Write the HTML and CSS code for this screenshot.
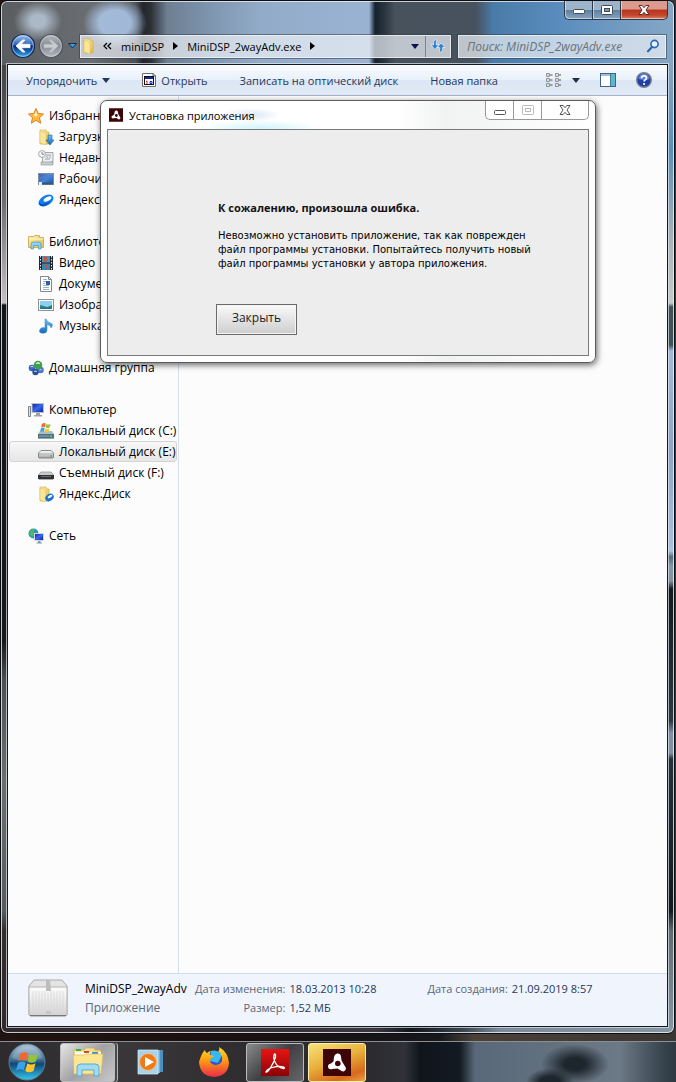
FILE: index.html
```html
<!DOCTYPE html>
<html lang="ru">
<head>
    <meta charset="UTF-8">
    <meta name="viewport" content="width=device-width, initial-scale=1.0">
    <title>MiniDSP_2wayAdv.exe</title>
    <link rel="stylesheet" href="styles.css">
</head>
<body>
    <!-- gradients and symbols shared by the icons -->
    <svg class="defs" width="0" height="0" aria-hidden="true">
        <defs>
            <linearGradient id="gFolder" x1="0" y1="0" x2="1" y2="1">
                <stop offset="0" stop-color="#fff4b4"/><stop offset="1" stop-color="#e2b94c"/>
            </linearGradient>
            <linearGradient id="gBlue" x1="0" y1="0" x2="0" y2="1">
                <stop offset="0" stop-color="#6fc4f4"/><stop offset="1" stop-color="#1566b8"/>
            </linearGradient>
            <linearGradient id="gScreen" x1="0" y1="0" x2="1" y2="1">
                <stop offset="0" stop-color="#0c1fa0"/><stop offset=".5" stop-color="#3b6bea"/><stop offset="1" stop-color="#0a1a94"/>
            </linearGradient>
            <linearGradient id="gDesk" x1="0" y1="0" x2="1" y2="1">
                <stop offset="0" stop-color="#1c3f8c"/><stop offset=".5" stop-color="#4a86d8"/><stop offset="1" stop-color="#1d4a94"/>
            </linearGradient>
            <linearGradient id="gMetal" x1="0" y1="0" x2="0" y2="1">
                <stop offset="0" stop-color="#ffffff"/><stop offset="1" stop-color="#a4a8aa"/>
            </linearGradient>
            <linearGradient id="gBox" x1="0" y1="0" x2="0" y2="1">
                <stop offset="0" stop-color="#fdfdfd"/><stop offset="1" stop-color="#d2d2d2"/>
            </linearGradient>
            <linearGradient id="gNavy" x1="0" y1="0" x2="0" y2="1">
                <stop offset="0" stop-color="#a8c8f0"/><stop offset=".45" stop-color="#2c62b8"/><stop offset=".5" stop-color="#06247e"/><stop offset="1" stop-color="#35b4f6"/>
            </linearGradient>
            <linearGradient id="gGray" x1="0" y1="0" x2="0" y2="1">
                <stop offset="0" stop-color="#b4bac0"/><stop offset=".5" stop-color="#858b92"/><stop offset="1" stop-color="#b6bcc2"/>
            </linearGradient>
            <linearGradient id="gOrb" x1="0" y1="0" x2="0" y2="1">
                <stop offset="0" stop-color="#a9c3d4"/><stop offset=".45" stop-color="#3e6f92"/><stop offset=".55" stop-color="#0f4674"/><stop offset="1" stop-color="#35c8f2"/>
            </linearGradient>
            <linearGradient id="gFox" x1="0" y1="0" x2="0" y2="1">
                <stop offset="0" stop-color="#ffe226"/><stop offset=".45" stop-color="#ff9a12"/><stop offset="1" stop-color="#e92a4a"/>
            </linearGradient>
            <linearGradient id="gRed" x1="0" y1="0" x2="0" y2="1">
                <stop offset="0" stop-color="#e81414"/><stop offset="1" stop-color="#8a0404"/>
            </linearGradient>
        </defs>
        <symbol id="folder" viewBox="0 0 16 16">
            <path d="M2 1h6l1 2h2v12H2z" fill="url(#gFolder)" stroke="#cda748" stroke-width=".6"/>
            <path d="M2 2l6 2v12l-6-2z" fill="#fbe695" stroke="#d8b85c" stroke-width=".5"/>
        </symbol>
        <symbol id="flag" viewBox="0 0 16 16">
            <path d="M2.500 2.500q3-2 5.200-.4L6.500 7q-2.400-1.600-5 .2z" fill="#f0682a"/>
            <path d="M8.500 2.500q2.500 1.600 5.500 0L12.700 7.400q-2.700 1.500-5.300 0z" fill="#93c43c"/>
            <path d="M1.300 8.300q2.600-1.800 5-.2L5 13q-2.500-1.500-5 .2z" fill="#3ea0e4"/>
            <path d="M7.200 8.500q2.500 1.600 5.300 0L11.200 13.400q-2.800 1.600-5.300 0z" fill="#fcc52c"/>
        </symbol>
        <symbol id="air" viewBox="0 0 28 27">
            <path d="M14 4.500q3.500-.5 4 3l.5 4 3 5q2.500 3 .5 5t-5-.5l-2.500-1.500-5 .5q-4 1-4.500-2t3-3.500l2.500-2 .5-4.500q.5-3 3-3.500z" fill="#fff"/>
            <circle cx="14.800" cy="14.500" r="2.800" fill="#3d0505"/>
        </symbol>
    </svg>

    <div class="desktop">
        <main class="explorer">
            <div class="caption">
                <button class="cap" aria-label="Свернуть"><svg width="14" height="12"><rect x="1.500" y="5.500" width="11" height="4" rx="1" fill="#fff" stroke="#3d4a58"/></svg></button>
                <button class="cap" aria-label="Развернуть"><svg width="14" height="12"><rect x="1.500" y="1.500" width="11" height="9" rx="1" fill="#fff" stroke="#3d4a58"/><rect x="4.500" y="4.500" width="5" height="3" fill="#8598ac" stroke="#3d4a58"/></svg></button>
                <button class="cap cap-close" aria-label="Закрыть окно"><svg width="14" height="12"><path d="M2 1.500h3.200L7 3.700l1.800-2.200H12L9 6l3 4.500H8.800L7 8.300l-1.800 2.200H2L5 6z" fill="#fff" stroke="#5b2a28"/></svg></button>
            </div>

            <div class="navbar">
                <button class="round" aria-label="Назад"><svg width="26" height="26" viewBox="0 0 26 26"><circle cx="13" cy="13" r="11.500" fill="url(#gNavy)" stroke="#14264e" stroke-width="1.200"/><circle cx="13" cy="13" r="10.400" fill="none" stroke="#b9d6f4" stroke-opacity=".7"/><path d="M6 13l6.500-6H15l-3.800 4.300H20v3.400h-8.800L15 19h-2.500z" fill="#fff" stroke="#fff" stroke-width=".8"/></svg></button>
                <button class="round" aria-label="Вперед"><svg width="26" height="26" viewBox="0 0 26 26"><circle cx="13" cy="13" r="11.500" fill="url(#gGray)" stroke="#4b5158" stroke-width="1.200"/><circle cx="13" cy="13" r="10.400" fill="none" stroke="#d5d9dd" stroke-opacity=".6"/><path d="M20 13l-6.500-6H11l3.800 4.300H6v3.400h8.800L11 19h2.500z" fill="#c9cdd0" stroke="#b4b9bd" stroke-width=".8"/></svg></button>
                <button class="recent" aria-label="Последние страницы"><svg width="9" height="6"><path d="M.5 .5h8L4.500 5z" fill="#3c9be0" stroke="#16304e"/></svg></button>
                <div class="address">
                    <svg class="address-icon" width="16" height="16"><use href="#folder"/></svg>
                    <button class="crumb-more" aria-label="Развернуть путь"><svg width="9" height="9"><path d="M4 1L1 4l3 3M8 1L5 4l3 3" fill="none" stroke="#000" stroke-width="1.300"/></svg></button>
                    <button class="crumb">miniDSP</button>
                    <svg width="5" height="8"><path d="M0 0l5 4-5 4z"/></svg>
                    <button class="crumb">MiniDSP_2wayAdv.exe</button>
                    <svg width="5" height="8"><path d="M0 0l5 4-5 4z"/></svg>
                    <button class="address-drop" aria-label="Список адресов"><svg width="8" height="5"><path d="M0 0h8L4 5z" fill="#0b1252"/></svg></button>
                    <button class="refresh" aria-label="Обновить"><svg width="16" height="14" viewBox="0 0 16 14"><path d="M6 .8Q3 1 3.500 6H1l4 4.500L8.800 6H6.300Q5.700 3.500 7 1z" fill="#2d7fd0" stroke="#fff" stroke-width=".6"/><path d="M10 13.200q3-.2 2.500-4.700H15L11 4 7.200 8.500h2.500q.6 2-.7 4.500z" fill="#2d7fd0" stroke="#fff" stroke-width=".6"/></svg></button>
                </div>
                <div class="search">
                    <input type="search" aria-label="Поиск" placeholder="Поиск: MiniDSP_2wayAdv.exe">
                    <svg width="14" height="14"><circle cx="8.500" cy="5" r="3.600" fill="#e4f1fa" stroke="#2c67b0" stroke-width="1.600"/><path d="M6 8l-4 4.300" stroke="#2c67b0" stroke-width="2.200" stroke-linecap="round"/></svg>
                </div>
            </div>

            <div class="client">
                <div class="toolbar">
                    <button class="tool tool-organize">Упорядочить <svg width="8" height="5"><path d="M0 0h8L4 5z" fill="#1e395b"/></svg></button>
                    <button class="tool tool-open"><svg width="14" height="16"><path d="M.5 1.500h11l2 2v11H.5z" fill="#fff" stroke="#6d6d6d"/><path d="M11 1v3h3" fill="#ccc" stroke="#6d6d6d"/><rect x="2.500" y="4.500" width="9" height="8" fill="#fff" stroke="#111"/><rect x="3" y="5" width="8" height="2" fill="#102a9c"/><path d="M4 9.500l1-.5v3" fill="none" stroke="#c22"/><path d="M8 9.500h2v2H8z" fill="none" stroke="#22c"/></svg>Открыть</button>
                    <button class="tool">Записать на оптический диск</button>
                    <button class="tool">Новая папка</button>
                    <div class="tool-right">
                        <button class="tool tool-view" aria-label="Вид"><svg width="16" height="14"><g fill="#fff" stroke="#767d84" stroke-width=".8"><path d="M.5.5h3v3h-3zM.5 5.500h3v3h-3zM.5 10.500h3v3h-3zM9.500.5h3v3h-3zM9.500 5.500h3v3h-3zM9.500 10.500h3v3h-3z"/></g><path d="M4 2h2.500M4 7h2.500M4 12h2.500M13 2h2M13 7h2M13 12h2" stroke="#4c545c"/><path d="M1.500 2h1M10.500 7h1" stroke="#d03030"/><path d="M1.500 7h1M10.500 2h1M1.500 12h1M10.500 12h1" stroke="#3a9a55"/></svg><svg width="8" height="5"><path d="M0 0h8L4 5z" fill="#1e2f4b"/></svg></button>
                        <button class="tool" aria-label="Область просмотра"><svg width="16" height="14"><rect x=".5" y=".5" width="15" height="13" fill="#fff" stroke="#3f6288"/><path d="M1 2h9" stroke="#a6bdd0" stroke-width="2"/><rect x="10" y="1" width="5" height="12" fill="#5fb4cf"/><path d="M10.500 1v12" stroke="#3f7a98"/></svg></button>
                        <button class="tool" aria-label="Справка"><svg width="16" height="16"><circle cx="8" cy="8" r="7.300" fill="#1d3fa6" stroke="#7c828e" stroke-width="1.400"/><path d="M2.500 7a5.500 5.500 0 0 1 11 0q-5 2-11 0z" fill="#6f92e0" opacity=".8"/><path d="M5.500 6.200q0-2.400 2.500-2.400t2.500 2.200q0 1.300-1.500 2-.9.500-.9 1.600" fill="none" stroke="#fff" stroke-width="1.700"/><circle cx="8.100" cy="12" r="1.100" fill="#fff"/></svg></button>
                    </div>
                </div>

                <div class="content">
                    <nav class="tree">
                        <ul>
                            <li><a href="#" class="root"><svg width="16" height="16"><path d="M8 .5l2.200 5 5.300.5-4 3.600 1.200 5.600L8 12.300l-4.700 2.900 1.200-5.600L.5 6l5.300-.5z" fill="#ffb93c" stroke="#d9802a"/><path d="M8 3l1.400 3.500L8 9 5 6.600l1.700-.3z" fill="#fff0b8"/></svg>Избранное</a></li>
                            <li><a href="#"><svg width="16" height="16"><use href="#folder"/><path d="M10 6h4v5h2l-4 5-4-5h2z" fill="url(#gBlue)" stroke="#1a5fa8" stroke-width=".6"/></svg>Загрузки</a></li>
                            <li><a href="#"><svg width="16" height="16"><path d="M6 2.500h9v9h-1.500v3H4.500v-6z" fill="#eceff0" stroke="#8b9296" stroke-width=".8"/><path d="M8 5h5M8 7h2M11 7h2M7 9h5" stroke="#9aa1a5"/><path d="M3 12h12v3H3z" fill="#c9cfd2" stroke="#868d91" stroke-width=".6"/><circle cx="4" cy="4" r="3.400" fill="#f6f8f8" stroke="#a4abae"/><path d="M4 2v2.200h2" fill="none" stroke="#667" stroke-width=".8"/></svg>Недавние места</a></li>
                            <li><a href="#"><svg width="16" height="16"><rect x=".5" y="2.500" width="15" height="11" fill="url(#gDesk)" stroke="#7f8fa5"/><path d="M1 3h14L1 9z" fill="#7ea6e6" opacity=".3"/><path d="M1 11.500h14v2H1z" fill="#33577d"/><path d="M1 11h3v3H1z" fill="#dff2fa"/></svg>Рабочий стол</a></li>
                            <li><a href="#"><svg width="16" height="16"><ellipse cx="8" cy="8.500" rx="8.200" ry="5" transform="rotate(-32 8 8.500)" fill="#0e7ff0"/><ellipse cx="9.500" cy="7" rx="4.300" ry="2" transform="rotate(-28 9.500 7)" fill="#fff"/><path d="M1 11q5 3 11-2-3 6-8 5-3-.5-3-3z" fill="#0752b8"/></svg>Яндекс.Диск</a></li>
                        </ul>
                        <ul>
                            <li><a href="#" class="root"><svg width="16" height="16"><path d="M.5 2.500h5l1-1h5v2h4v10H.5z" fill="url(#gFolder)" stroke="#c9a23c" stroke-width=".8"/><path d="M1 5h14" stroke="#fff7cf"/><path d="M3 15V10.500Q3 8 5.500 8h5Q13 8 13 10.500V15h-2.500v-3.500h-5V15z" fill="#8fd2f0" stroke="#4597c4" stroke-width=".7"/></svg>Библиотеки</a></li>
                            <li><a href="#"><svg width="16" height="16"><rect x="1" y="1" width="14" height="14" fill="#23272b"/><path d="M2.500 1v14M13.500 1v14" stroke="#e9edf0" stroke-dasharray="1.500 1.500"/><rect x="4" y="1" width="8" height="6.500" fill="#4d8fc0"/><rect x="4" y="8.500" width="8" height="6.500" fill="#3f7fb2"/><path d="M6 1q5 1 3 5l-3 1zM7 9q5 2 1 5z" fill="#c8563c"/></svg>Видео</a></li>
                            <li><a href="#"><svg width="16" height="16"><path d="M2.500.5h8l3 3v12h-11z" fill="#fff" stroke="#85898e"/><path d="M10.500.5v3h3" fill="none" stroke="#85898e"/><path d="M5 3.500h4M5 5.500h3M5 7.500h2M5 9.500h6M5 11.500h6M5 13.500h6" stroke="#9ab2cc"/><rect x="8" y="5" width="4" height="4" fill="#2c5fa6"/></svg>Документы</a></li>
                            <li><a href="#"><svg width="16" height="16"><rect x=".5" y="2.500" width="15" height="11" fill="#fff" stroke="#8d9396"/><rect x="2" y="4" width="12" height="8" fill="#8fd0f2"/><path d="M2 8l4 1 3 1 5-2v4H2z" fill="#2e8c78"/><path d="M2 10.500h12V12H2z" fill="#1f6fa4"/></svg>Изображения</a></li>
                            <li><a href="#"><svg width="16" height="16"><path d="M8 1q1 3 4.500 4t.5 5q0-3-4-3.500V12q0 3.300-4 3.300T1.500 12.600 5 9.500q1 0 2 .4V1z" fill="url(#gBlue)" stroke="#2d82c4" stroke-width=".5"/></svg>Музыка</a></li>
                        </ul>
                        <ul>
                            <li><a href="#" class="root"><svg width="16" height="16"><circle cx="4" cy="8" r="3.300" fill="#3a66c4"/><circle cx="12.500" cy="10" r="3.300" fill="#4a79cc"/><circle cx="7.500" cy="12" r="3.200" fill="#2a4d9c"/><circle cx="10" cy="5" r="4.300" fill="#3fa04c"/><path d="M8 3.500q2-2 4 0-2-.5-4 0zM2.500 7q1.500-1.500 3 0M11.500 10q1-.8 2 0M6 11.500q1.500-1 3 0" fill="#d4f4c4" stroke="#d8ecfa" stroke-width=".8"/></svg>Домашняя группа</a></li>
                        </ul>
                        <ul>
                            <li><a href="#" class="root"><svg width="16" height="16"><path d="M.5 4.500h2v10h-2z" fill="#dfe4e6" stroke="#7d8588"/><rect x="4" y="1.500" width="11.500" height="9" fill="url(#gScreen)" stroke="#b9bfc6"/><path d="M8 11h4v2h2v1.500H6V13h2z" fill="#9ea4aa"/></svg>Компьютер</a></li>
                            <li><a href="#"><svg width="16" height="16"><path d="M2 8h12l2 3v4.500H0V11z" fill="#a9bec8"/><path d="M0 11h16v4.500H0z" fill="#4f7285"/><path d="M1 13h10" stroke="#86a7b6"/><circle cx="13" cy="13.300" r="1" fill="#5fe34a"/><svg x="2" y="-1" width="12" height="12" viewBox="0 0 16 16"><use href="#flag"/></svg></svg>Локальный диск (C:)</a></li>
                            <li><a href="#" class="selected"><svg width="16" height="16"><path d="M3 6.500h10q2.500 2 2.500 3.500v3q0 1-1 1h-13q-1 0-1-1v-3Q.5 8.500 3 6.500z" fill="url(#gMetal)" stroke="#77797b" stroke-width=".9"/><path d="M1 10h14" stroke="#b2b4b5"/><circle cx="13" cy="12" r="1" fill="#59b848"/></svg>Локальный диск (E:)</a></li>
                            <li><a href="#"><svg width="16" height="16"><path d="M3 7h10q2.500 2 2.500 3.500v2.500q0 1-1 1h-13q-1 0-1-1v-2.500Q.5 9 3 7z" fill="#c9cbcc" stroke="#8a8c8e" stroke-width=".7"/><path d="M0 10h16v3.500q0 .8-1 .8H1q-1 0-1-.8z" fill="#303234"/><path d="M3 11.500h10" stroke="#6c6e70"/></svg>Съемный диск (F:)</a></li>
                            <li><a href="#"><svg width="16" height="16"><use href="#folder"/><ellipse cx="11.500" cy="11.500" rx="4.500" ry="3.400" transform="rotate(-30 11.500 11.500)" fill="#1c74d4"/><ellipse cx="12" cy="10.500" rx="2.500" ry="1.200" transform="rotate(-28 12 10.500)" fill="#fff"/></svg>Яндекс.Диск</a></li>
                        </ul>
                        <ul>
                            <li><a href="#" class="root"><svg width="16" height="16"><circle cx="5.500" cy="5.500" r="5" fill="#2d8fd0"/><path d="M2 3q3-3 5-1.500L5.500 4 7 6 4 9 1 6z" fill="#4dbb5a"/><rect x="6.500" y="5.500" width="9" height="7" fill="url(#gScreen)" stroke="#d1d6dc"/><path d="M10 13h2.500v1.500h1.500v1H8.500v-1H10z" fill="#7c9ab5"/></svg>Сеть</a></li>
                        </ul>
                    </nav>
                    <div class="files"></div>
                </div>

                <div class="details">
                    <svg class="file-icon" width="42" height="38" viewBox="0 0 42 38">
                        <path d="M7 1h28l5 6v28q0 2-2 2H4q-2 0-2-2V7z" fill="#e4e4e4" stroke="#a9a9a9"/>
                        <path d="M2 8h38v27q0 2-2 2H4q-2 0-2-2z" fill="url(#gBox)" stroke="#b4b4b4"/>
                        <path d="M6 12v22M9 12v22M12 12v22M15 12v22M18 12v22M21 14v20M24 12v22M27 12v22M30 12v22M33 12v22M36 12v22" stroke="#d8d8d8" opacity=".8"/>
                        <path d="M19 1h4l1 11h-5z" fill="#bcbcbc"/><path d="M19 32h5v3h-5z" fill="#c6c6c6"/>
                        <path d="M3 36.500h36" stroke="#777"/>
                    </svg>
                    <div class="file-name">
                        <strong>MiniDSP_2wayAdv</strong>
                        <span>Приложение</span>
                    </div>
                    <dl class="props">
                        <dt>Дата изменения:</dt><dd>18.03.2013 10:28</dd>
                        <dt>Размер:</dt><dd>1,52 МБ</dd>
                    </dl>
                    <dl class="props props-created">
                        <dt>Дата создания:</dt><dd>21.09.2019 8:57</dd>
                    </dl>
                </div>
            </div>
        </main>

        <section class="dialog" role="dialog" aria-labelledby="dialogTitle">
            <header class="dialog-bar">
                <svg width="14" height="14" viewBox="0 0 28 27"><rect width="28" height="27" fill="#3d0505"/><use href="#air"/></svg>
                <span id="dialogTitle">Установка приложения</span>
                <div class="dialog-caption">
                    <button class="dcap" aria-label="Свернуть"><svg width="14" height="12"><rect x="1.500" y="6.500" width="11" height="4" rx="1" fill="#fff" stroke="#555"/></svg></button>
                    <button class="dcap" aria-label="Развернуть" disabled><svg width="14" height="12"><rect x="1.500" y="1.500" width="11" height="9" rx="1" fill="#fff" stroke="#bbb"/><rect x="4.500" y="4.500" width="5" height="3" fill="#fff" stroke="#bbb"/></svg></button>
                    <button class="dcap dcap-close" aria-label="Закрыть установку"><svg width="14" height="12"><path d="M2 1.500h3.200L7 3.700l1.800-2.200H12L9 6l3 4.500H8.800L7 8.300l-1.800 2.200H2L5 6z" fill="#fff" stroke="#555"/></svg></button>
                </div>
            </header>
            <div class="dialog-body">
                <h1>К сожалению, произошла ошибка.</h1>
                <p>Невозможно установить приложение, так как поврежден файл программы установки. Попытайтесь получить новый файл программы установки у автора приложения.</p>
                <button class="btn-close">Закрыть</button>
            </div>
        </section>

        <footer class="taskbar">
            <button class="start" aria-label="Пуск"><svg width="38" height="38" viewBox="0 0 38 38"><circle cx="19" cy="19" r="18" fill="url(#gOrb)" stroke="#5b7f96"/><path d="M4 15a15.500 15.500 0 0 1 30 0q-15 6-30 0z" fill="#fff" opacity=".2"/><svg x="8" y="7" width="25" height="25" viewBox="0 0 16 16"><use href="#flag"/></svg></svg></button>
            <button class="task task-stack" aria-label="Проводник"><svg width="34" height="30" viewBox="0 0 34 30"><path d="M3 3h10l2-2h8l1 2h6v24H3z" fill="url(#gFolder)" stroke="#d0a94a" stroke-width=".7"/><path d="M4 5h26v4H4z" fill="#fdfdf2"/><path d="M5 2h5v2H5z" fill="#3fae49"/><path d="M13 4h5v2h-5z" fill="#d04a32"/><path d="M21 5h6v2h-6z" fill="#3c8fd0"/><path d="M2 8h11l2-1h17l-2 20H3z" fill="#fbe694" stroke="#d9b860" stroke-width=".7"/><path d="M6 29V20q0-3 4-3h14q4 0 4 3v9h-5v-6H11v6z" fill="#9fdcf4" stroke="#5ba9d0"/></svg></button>
            <button class="task-icon" aria-label="Проигрыватель"><svg width="28" height="28" viewBox="0 0 28 28"><path d="M6 2h20v22H6z" fill="#4d8fbd"/><path d="M4 2h19v23H4z" fill="#74b3da"/><path d="M1 2h20v24H1z" fill="#a5d3ee" stroke="#e0f1fa" stroke-width=".7"/><circle cx="11" cy="14" r="8.500" fill="#ef7a1a" stroke="#fbc07c"/><path d="M8 9l9 5-9 5z" fill="#fff"/></svg></button>
            <button class="task-icon" aria-label="Firefox"><svg width="32" height="32" viewBox="0 0 32 32"><circle cx="17" cy="16" r="11" fill="#2a55c8"/><path d="M13 5q6-2 11 4l-4 8-8-2z" fill="#36b8f0"/><path d="M4 8q1-2 3-4 0 2 2 3 2-2 4-2-2 2-1 4 3 0 4 2-3 0-4 3 0 4 5 5 5 0 7-4 1-6-4-10 2 0 1-4 9 5 10 16-1 13-15 14-14-1-15-15 1-4 3-8z" fill="url(#gFox)"/></svg></button>
            <button class="task task-dark" aria-label="Adobe Reader"><svg width="28" height="27" viewBox="0 0 28 27"><rect width="28" height="27" fill="url(#gRed)"/><path d="M13.500 5q-2 3 1 9 3 5 8 5.500 2-.5 0-1.500-6-1.500-13 1-4 1.500-4.500 4 1 1 4-3.500 4-6 5.500-11.500.3-3-1-3z" fill="none" stroke="#fff" stroke-width="1.300"/></svg></button>
            <button class="task task-active" aria-label="Adobe AIR"><svg width="28" height="27" viewBox="0 0 28 27"><rect width="28" height="27" fill="#3d0505"/><use href="#air"/></svg></button>
        </footer>
    </div>
</body>
</html>
```

FILE: styles.css
```css
* {
    box-sizing: border-box;
}
body {
    margin: 0;
    font-family: "Open Sans", "Noto Sans", sans-serif;
    font-size: 12px;
    color: #000;
}
button {
    display: flex;
    align-items: center;
    justify-content: center;
    padding: 0;
    border: none;
    background: none;
    font: inherit;
    color: inherit;
}
svg {
    display: block;
    flex: none;
}
.defs {
    position: absolute;
}
.desktop {
    position: relative;
    display: flex;
    flex-direction: column;
    min-height: 100vh;
    background: linear-gradient(90deg, #21130f, #1a1010 40%, #15171b 65%, #4a4038 70%, #3c3632);
}

/* explorer window */
.explorer {
    flex: 1;
    display: flex;
    flex-direction: column;
    margin: 0 1px 7px 0;
    padding: 0 6px 6px;
    border: 1px solid #0c0d10;
    border-radius: 7px;
    box-shadow: inset 0 0 0 1px rgba(235, 240, 245, .8);
    background:
        radial-gradient(ellipse 24px 20px at 37px 20px, rgba(190, 206, 222, .8) 30%, transparent),
        radial-gradient(ellipse 32px 26px at 114px 22px, rgba(170, 195, 228, .9) 50%, transparent),
        linear-gradient(90deg, #5a5d60 0, #6a6e72 90px, #4c5056 135px, #22262c 142px, #2d3136 150px, #6d7f92 166px, #8098b2 215px, #92abc9 260px, #9ab3d3 368px, #15222f 374px, #2a3640 384px, #48525d 394px, #47525f 475px, #4a7ba8 492px, #5a8dbe 560px, #86a7c6 100%) 0 0 / 100% 64px no-repeat,
        linear-gradient(90deg, #30282a, #3a3640 375px, #10151c 410px, #39424c 460px, #7c8b9c 500px, #8796a4) 0 100% / 100% 7px no-repeat,
        linear-gradient(180deg, #444 64px, #6f6c70 200px, #c8bfc6 302px, #13151a 304px, #16181e 640px, #4a5154 680px, #6a7072 780px, #555b5e 910px, #382c2c 930px, #30282a 100%) 0 0 / 50% 100% no-repeat,
        linear-gradient(180deg, #84a6c4 64px, #5c8fb8 150px, #a8b4b8 240px, #c4cac8 302px, #3e5258 306px, #3e5258 344px, #a0bbda 350px, #8ea4c4 450px, #a6c2e4 550px, #5a6878 556px, #8497ac 565px, #84909c 580px, #111a20 588px, #2b3842 720px, #7f90a6 732px, #7f90a6 752px, #25323a 758px, #101a20 910px, #5f6c72 930px, #8796a4 100%) 100% 0 / 50% 100% no-repeat;
}
.caption {
    display: flex;
    justify-content: flex-end;
}
.cap {
    width: 28px;
    height: 19px;
    border: 1px solid #2a3a4c;
    border-top: none;
    border-right: none;
    box-shadow: inset 1px -1px 0 rgba(255, 255, 255, .5);
    background: linear-gradient(180deg, #9db4cb 50%, #5f7f9f 50%, #86a4c0);
}
.cap:first-child {
    border-bottom-left-radius: 5px;
}
.cap-close {
    width: 48px;
    border-right: 1px solid #2a3a4c;
    border-bottom-right-radius: 5px;
    background: linear-gradient(180deg, #dc9a8e 45%, #b8321c 50%, #c4482e 80%, #dd8468);
}
.navbar {
    display: flex;
    align-items: center;
    gap: 2px;
    padding: 13px 2px 5px 3px;
}
.round {
    width: 26px;
    height: 26px;
}
.recent {
    width: 12px;
    height: 22px;
}
.address,
.search {
    display: flex;
    align-items: center;
    height: 23px;
    border: 1px solid rgba(245, 248, 250, .7);
    outline: 1px solid rgba(50, 60, 70, .55);
    background: rgba(236, 240, 245, .72);
}
.address {
    flex: 1;
    gap: 9px;
    padding-left: 1px;
    font-size: 11px;
}
.address-icon {
    margin-right: -4px;
}
.address-drop {
    width: 20px;
    height: 21px;
    margin-left: auto;
}
.refresh {
    width: 25px;
    height: 21px;
    margin-left: -9px;
    border-left: 1px solid #7d858e;
}
.search {
    width: 208px;
    margin-left: 5px;
    padding: 0 5px 0 8px;
}
.search input {
    flex: 1;
    min-width: 0;
    padding: 0;
    border: none;
    outline: none;
    background: none;
    font: italic 12px "Open Sans", "Noto Sans", sans-serif;
}
.search input::placeholder {
    color: #6b7178;
    opacity: 1;
}
.client {
    flex: 1;
    display: flex;
    flex-direction: column;
    border: 1px solid #15181c;
    box-shadow: 0 0 0 1px rgba(225, 232, 238, .7);
    background: #fcfcfc;
}
.toolbar {
    display: flex;
    align-items: center;
    gap: 32px;
    height: 31px;
    padding: 0 15px 0 18px;
    border-bottom: 1px solid #a6b4ca;
    background: linear-gradient(180deg, #fafcfe, #e8f0fa 50%, #dce6f4 50%, #e1eaf6);
    color: #1e395b;
    font-size: 11px;
}
.tool {
    gap: 5px;
    white-space: nowrap;
}
.tool-view {
    gap: 10px;
}
.tool-right {
    display: flex;
    align-items: center;
    gap: 20px;
    margin-left: auto;
}
.content {
    flex: 1;
    display: flex;
}
.tree {
    width: 171px;
    padding-top: 9px;
    border-right: 1px solid #d6e0f0;
}
.tree ul {
    margin: 0 0 21px;
    padding: 0;
    list-style: none;
}
.tree a {
    display: flex;
    align-items: center;
    gap: 5px;
    height: 21px;
    margin: 0 1px;
    padding-left: 28px;
    border: 1px solid transparent;
    border-radius: 3px;
    color: #000;
    text-decoration: none;
    white-space: nowrap;
}
.tree .root {
    padding-left: 18px;
}
.tree .selected {
    border-color: #d4d4d4;
    background: linear-gradient(180deg, #f8f8f8, #e6e6e6);
}
.files {
    flex: 1;
}
.details {
    display: flex;
    height: 53px;
    padding: 5px 0 0 19px;
    border-top: 1px solid #cfdcec;
    background: #f0f4fc;
    color: #5a6779;
    line-height: 19px;
}
.file-name {
    display: flex;
    flex-direction: column;
    width: 110px;
    margin-left: 16px;
}
.file-name strong {
    font-weight: normal;
    color: #000;
}
.props {
    display: grid;
    grid-template-columns: auto auto;
    align-content: start;
    column-gap: 4px;
    margin: 0;
    font-size: 11px;
    white-space: nowrap;
}
.props dt {
    text-align: right;
}
.props dd {
    margin: 0;
    color: #1e395b;
}
.props-created {
    margin-left: 51px;
}

/* installer window */
.dialog {
    position: absolute;
    top: 100px;
    left: 100px;
    width: 496px;
    padding: 0 6px 6px;
    border: 1px solid #5a5c5e;
    border-radius: 7px;
    box-shadow: 1px 2px 6px rgba(0, 0, 0, .6);
    background:
        radial-gradient(ellipse 60px 8px at 160px 27px, rgba(190, 240, 250, .7), transparent),
        radial-gradient(ellipse 30px 7px at 150px 14px, rgba(180, 205, 235, .5), transparent),
        linear-gradient(90deg, #fff 60%, #f1f3f2 70%, #fff);
}
.dialog-bar {
    display: flex;
    align-items: center;
    gap: 6px;
    height: 28px;
    padding-left: 2px;
    font-size: 11px;
}
.dialog-caption {
    display: flex;
    align-self: flex-start;
    margin-left: auto;
}
.dcap {
    width: 28px;
    height: 19px;
    border: 1px solid #999;
    border-top: none;
    border-right: none;
    background: #fff;
}
.dcap:first-child {
    border-bottom-left-radius: 5px;
}
.dcap-close {
    width: 48px;
    border-right: 1px solid #999;
    border-bottom-right-radius: 5px;
}
.dialog-body {
    padding: 70px 38px 20px 110px;
    border: 1px solid #77797b;
    background: #ededed;
}
.dialog-body h1 {
    margin: 0 0 13px;
    font-size: 11px;
    line-height: 16px;
    color: #111;
}
.dialog-body p {
    margin: 0 0 33px;
    font: 10px/14px "DejaVu Sans", Verdana, sans-serif;
}
.btn-close {
    width: 81px;
    height: 31px;
    margin-left: -2px;
    padding-bottom: 4px;
    border: 1px solid #6a6a6a;
    box-shadow: inset 0 0 0 1px #f4f4f4;
    background: linear-gradient(180deg, #fafafa, #cdcdcd);
    font-size: 12px;
    color: #222;
}

/* taskbar */
.taskbar {
    display: flex;
    align-items: center;
    height: 41px;
    padding-left: 8px;
    border-top: 1px solid #8b8f94;
    background:
        radial-gradient(ellipse 34px 20px at 575px 22px, #1d252d 30%, transparent),
        radial-gradient(ellipse 24px 14px at 550px 40px, #1d252d 40%, transparent),
        linear-gradient(90deg, #2e2b2e, #39373a 130px, #2f2c30 250px, #2c2b2f 370px, #303238 405px, #10151c 420px, #131a22 460px, #59687a 475px, #64727f 560px, #6c7986 620px, #3a4650 660px, #2d3840 100%);
}
.task {
    width: 58px;
    height: 39px;
    border: 1px solid #b9bbbd;
    border-radius: 3px;
}
.task-stack {
    width: 55px;
    margin-left: 14px;
    background: linear-gradient(135deg, #e6e6e6, #a2a2a4 50%, #c8c8ca);
    box-shadow: 2px 0 0 #4a4a4c, 3px 0 0 #b4b4b6;
}
.task-icon {
    width: 32px;
    height: 38px;
    margin-left: 20px;
}
.task-icon + .task-icon {
    margin-left: 31px;
}
.task-dark {
    margin-left: 16px;
    background: linear-gradient(135deg, #8a8b8d, #3f3f43 50%, #66676b);
}
.task-active {
    margin-left: 4px;
    border-color: #fff0b0;
    background: linear-gradient(160deg, #f7e27a, #e8b03a 45%, #d8691c 80%, #efa040);
}
```
